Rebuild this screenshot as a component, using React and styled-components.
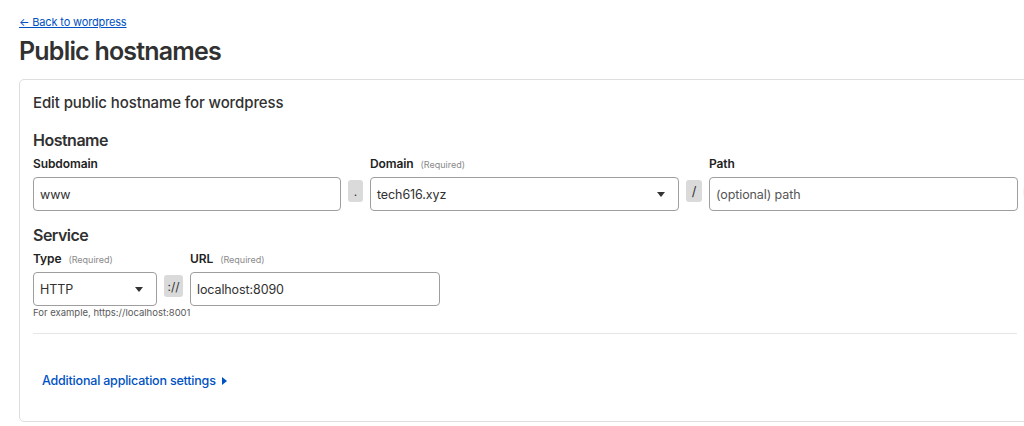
import React from "react";
import styled, { createGlobalStyle } from "styled-components";

const Global = createGlobalStyle`
  html, body { margin: 0; padding: 0; background: #fff; overflow: hidden; }
  body { font-family: Inter, "Noto Sans", "Liberation Sans", sans-serif; color: #313131; }
  * { box-sizing: border-box; }
`;

const Page = styled.div`
  padding: 10px 0 0 19px;
  width: 1060px;
`;

const BackLink = styled.a`
  display: inline-block;
  font-size: 11px;
  line-height: 14px;
  letter-spacing: -0.15px;
  color: #0051c3;
  text-decoration: underline;
  text-underline-offset: 1px;
  cursor: pointer;
`;

const Title = styled.h1`
  margin: 5px 0 12px;
  font-size: 25px;
  line-height: 32px;
  font-weight: 600;
  letter-spacing: -0.8px;
  color: #313131;
`;

const Card = styled.section`
  width: 1012px;
  border: 1px solid #dedede;
  border-radius: 5px;
  padding: 13px 13px 31px 13px;
`;

const CardTitle = styled.h2`
  margin: 0;
  font-size: 15px;
  line-height: 20px;
  font-weight: 500;
  letter-spacing: -0.1px;
`;

const SectionHeading = styled.h3`
  margin: ${(p) => p.$top}px 0 5px;
  font-size: 16px;
  line-height: 22px;
  font-weight: 600;
  letter-spacing: -0.5px;
`;

const FieldGrid = styled.div`
  display: grid;
  grid-template-columns: ${(p) => p.$cols};
  column-gap: 7px;
  row-gap: 4px;
  align-items: start;
`;

const Label = styled.label`
  display: flex;
  align-items: baseline;
  gap: 7px;
  font-size: 12px;
  line-height: 16px;
  font-weight: 600;
  letter-spacing: -0.1px;
  color: #222;
`;

const Req = styled.span`
  font-size: 9px;
  font-weight: 400;
  letter-spacing: 0;
  color: #8a8a8a;
`;

const Input = styled.div`
  height: 34px;
  border: 1px solid #9e9e9e;
  border-radius: 4px;
  display: flex;
  align-items: center;
  padding: 0 7px 0 6px;
  font-size: 12.5px;
  letter-spacing: -0.1px;
  color: ${(p) => (p.$placeholder ? "#555" : "#313131")};
  background: #fff;
`;

const Caret = styled.span`
  margin-left: auto;
  margin-right: 6px;
  width: 0;
  height: 0;
  border-left: 4.5px solid transparent;
  border-right: 4.5px solid transparent;
  border-top: 5px solid #333;
`;

const Addon = styled.span`
  margin-top: 3px;
  height: 22px;
  border-radius: 3px;
  background: #dadada;
  color: #333;
  display: flex;
  align-items: center;
  justify-content: center;
  font-size: ${(p) => p.$size || 12}px;
`;

const Ghost = styled.span`
  margin-top: 3px;
  margin-left: -2px;
  width: 24px;
  height: 24px;
  border-radius: 50%;
  background: #f1f1f6;
`;

const Hint = styled.div`
  margin-top: 1px;
  font-size: 9.5px;
  line-height: 12px;
  color: #595959;
`;

const Divider = styled.hr`
  margin: 14px 0 0;
  width: 984px;
  border: 0;
  border-top: 1px solid #e6e6e6;
`;

const MoreLink = styled.a`
  display: inline-flex;
  align-items: center;
  gap: 6px;
  margin: 38px 0 0 9px;
  font-size: 12.5px;
  line-height: 18px;
  font-weight: 500;
  letter-spacing: -0.2px;
  color: #0051c3;
  cursor: pointer;
`;

const RightCaret = styled.span`
  width: 0;
  height: 0;
  border-top: 4.5px solid transparent;
  border-bottom: 4.5px solid transparent;
  border-left: 5px solid #0051c3;
`;

const Empty = styled.span``;

export default function App() {
  return (
    <>
      <Global />
      <Page>
        <BackLink>← Back to wordpress</BackLink>
        <Title>Public hostnames</Title>
        <Card>
          <CardTitle>Edit public hostname for wordpress</CardTitle>

          <SectionHeading $top={16}>Hostname</SectionHeading>
          <FieldGrid $cols="308px 15px 309px 16px 309px 24px">
            <Label>Subdomain</Label>
            <Empty />
            <Label>
              Domain <Req>(Required)</Req>
            </Label>
            <Empty />
            <Label>Path</Label>
            <Empty />

            <Input>www</Input>
            <Addon>.</Addon>
            <Input>
              tech616.xyz
              <Caret />
            </Input>
            <Addon $size={13}>/</Addon>
            <Input $placeholder>(optional) path</Input>
            <Ghost />
          </FieldGrid>

          <SectionHeading $top={13}>Service</SectionHeading>
          <FieldGrid $cols="124px 19px 250px">
            <Label>
              Type <Req>(Required)</Req>
            </Label>
            <Empty />
            <Label>
              URL <Req>(Required)</Req>
            </Label>

            <Input>
              HTTP
              <Caret />
            </Input>
            <Addon $size={12}>://</Addon>
            <Input>localhost:8090</Input>
          </FieldGrid>
          <Hint>For example, https://localhost:8001</Hint>

          <Divider />

          <MoreLink>
            Additional application settings
            <RightCaret />
          </MoreLink>
        </Card>
      </Page>
    </>
  );
}
